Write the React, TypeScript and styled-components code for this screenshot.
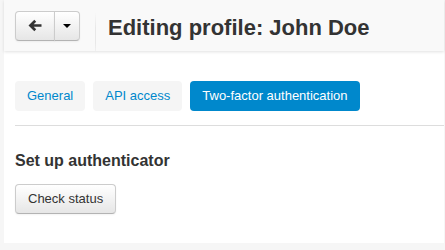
import styled, { createGlobalStyle } from 'styled-components';

const GlobalStyle = createGlobalStyle`
  html, body {
    margin: 0;
    padding: 0;
    background: #f6f6f6;
    font-family: "Liberation Sans", Arial, sans-serif;
    color: #333;
  }
`;

const Container = styled.div`
  width: 440px;
  margin-left: 4px;
`;

const Header = styled.header`
  display: flex;
  align-items: center;
  height: 51px;
  padding: 0 11px;
  background: #f9f9f9;
  box-shadow: 0 1px 3px rgba(0, 0, 0, .12);
  position: relative;
  z-index: 1;
`;

const BtnGroup = styled.div`
  display: flex;
  height: 30px;
`;

const Btn = styled.button<{ $w?: number }>`
  display: inline-flex;
  align-items: center;
  justify-content: center;
  box-sizing: border-box;
  height: 30px;
  width: ${({ $w }) => ($w ? `${$w}px` : 'auto')};
  padding: 0 12px;
  font: 13px/18px "Liberation Sans", Arial, sans-serif;
  color: #333;
  background: linear-gradient(#ffffff, #e6e6e6);
  border: 1px solid #cccccc;
  border-bottom-color: #b3b3b3;
  border-radius: 4px;
  box-shadow: inset 0 1px 0 rgba(255, 255, 255, .2), 0 1px 2px rgba(0, 0, 0, .05);
  cursor: pointer;

  ${BtnGroup} > & {
    padding: 0;
  }
  ${BtnGroup} > &:first-child {
    border-radius: 4px 0 0 4px;
  }
  ${BtnGroup} > &:last-child {
    border-radius: 0 4px 4px 0;
    margin-left: -1px;
  }
`;

const Divider = styled.div`
  width: 1px;
  align-self: stretch;
  margin: 12px 12px 0 15px;
  background: linear-gradient(#f9f9f9, #e8e8e8 40%, #e8e8e8 80%, #f0f0f0);
`;

const Title = styled.h1`
  margin: 0;
  font-size: 22px;
  font-weight: bold;
  color: #333;
  line-height: 24px;
  padding-top: 4px;
`;

const Panel = styled.main`
  background: #fff;
  padding: 30px 0 29px 11px;
`;

const Pills = styled.nav`
  display: flex;
  gap: 8px;
  padding-bottom: 14px;
  border-bottom: 1px solid #dddddd;
`;

const Pill = styled.a<{ $active?: boolean }>`
  display: block;
  padding: 6px 12px;
  line-height: 18px;
  font-size: 13px;
  border-radius: 4px;
  text-decoration: none;
  color: ${({ $active }) => ($active ? '#fff' : '#0088cc')};
  background: ${({ $active }) => ($active ? '#0088cc' : '#f5f5f5')};
`;

const Section = styled.h3`
  margin: 25px 0 13px;
  font-size: 16px;
  line-height: 20px;
  font-weight: bold;
  color: #333;
`;

function ArrowLeft() {
  return (
    <svg width="14" height="13" viewBox="0 0 14 13">
      <path d="M0.5 6.5 L6.3 0.8 L8.2 2.7 L5.7 5.3 H13.5 V7.7 H5.7 L8.2 10.3 L6.3 12.2 Z" fill="#333" />
    </svg>
  );
}

function Caret() {
  return (
    <svg width="8" height="4" viewBox="0 0 8 4">
      <path d="M0 0 H8 L4 4 Z" fill="#000" />
    </svg>
  );
}

export default function App() {
  return (
    <>
      <GlobalStyle />
      <Container>
        <Header>
          <BtnGroup>
            <Btn $w={40}><ArrowLeft /></Btn>
            <Btn $w={26}><Caret /></Btn>
          </BtnGroup>
          <Divider />
          <Title>Editing profile: John Doe</Title>
        </Header>
        <Panel>
          <Pills>
            <Pill href="#">General</Pill>
            <Pill href="#">API access</Pill>
            <Pill href="#" $active>Two-factor authentication</Pill>
          </Pills>
          <Section>Set up authenticator</Section>
          <Btn>Check status</Btn>
        </Panel>
      </Container>
    </>
  );
}
